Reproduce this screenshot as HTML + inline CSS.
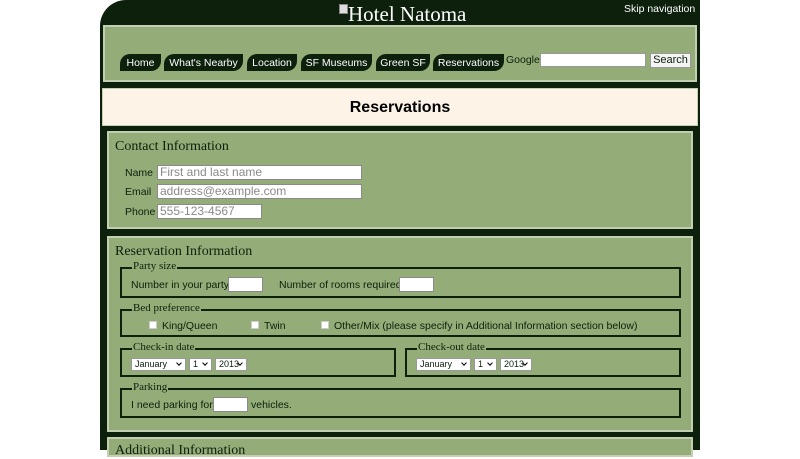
<!DOCTYPE html>
<html><head><style>
*{box-sizing:border-box;margin:0;padding:0}
body{width:800px;height:450px;background:#fff;position:relative;overflow:hidden;font-family:"Liberation Sans",sans-serif;font-size:10.5px;color:#0c1f0c;white-space:nowrap}
.a{position:absolute}
#wrap{left:100px;top:0;width:600px;height:450px;background:#0c200c;border-top-left-radius:26px}
.serif{font-family:"Liberation Serif",serif}
.tab{position:absolute;top:54px;height:17px;background:#0c200c;color:#fff;border-radius:10px 0 10px 0;font-size:10.5px;line-height:18px;text-align:center}
.panel{background:#94ad78;border:2px solid #c3cfb3}
.inp{position:absolute;background:#fff;border:1px solid #8a8a8a;height:15px;font-size:12px;color:#8a8a8a;line-height:13px;padding-left:2px}
.fs{position:absolute;border:2px solid #0c200c}
.lg{position:absolute;top:-9px;left:10px;background:#94ad78;padding:0 1px;font-family:"Liberation Serif",serif;font-size:11px}
.sel{position:absolute;background:#fff;border:1px solid #999;height:13px;font-size:9px;line-height:11px;padding-left:3px}
.sel:after{content:"";position:absolute;right:4px;top:2px;width:3px;height:3px;border-right:1.5px solid #000;border-bottom:1.5px solid #000;transform:rotate(45deg)}
.cb{position:absolute;width:8px;height:8px;background:#fff;border:1px solid #ccc}
</style></head><body>
<div id="wrap" class="a"></div>
<div class="a" style="left:339px;top:4px;width:9px;height:10px;border:1px solid #888;background:#ddd"></div>
<div class="a serif" style="left:348px;top:2px;color:#fff;font-size:21px">Hotel Natoma</div>
<div class="a" style="left:624px;top:3px;color:#fff;font-size:10.5px">Skip navigation</div>
<div class="a panel" style="left:103px;top:25px;width:594px;height:57px"></div>
<div class="tab" style="left:120px;width:41px">Home</div>
<div class="tab" style="left:164px;width:79px">What's Nearby</div>
<div class="tab" style="left:247px;width:50px">Location</div>
<div class="tab" style="left:301px;width:71px">SF Museums</div>
<div class="tab" style="left:376px;width:54px">Green SF</div>
<div class="tab" style="left:433px;width:71px">Reservations</div>
<div class="a" style="left:506px;top:54px">Google</div>
<div class="a" style="left:540px;top:53px;width:106px;height:14px;background:#fff;border:1px solid #999"></div>
<div class="a" style="left:650px;top:53px;width:41px;height:15px;background:#f4f4f4;border:1px solid #999;font-size:11px;text-align:center;line-height:13px">Search</div>
<div class="a" style="left:102px;top:88px;width:596px;height:38px;background:#fdf3e6;border:1px solid #c3cfb3;text-align:center;font-weight:bold;font-size:16px;line-height:38px;color:#000">Reservations</div>

<div class="a panel" style="left:107px;top:131px;width:586px;height:98px"></div>
<div class="a serif" style="left:115px;top:139px;font-size:14px">Contact Information</div>
<div class="a" style="left:125px;top:167px">Name</div>
<div class="a" style="left:125px;top:186px">Email</div>
<div class="a" style="left:125px;top:206px">Phone</div>
<div class="inp" style="left:157px;top:165px;width:205px">First and last name</div>
<div class="inp" style="left:157px;top:184px;width:205px">address@example.com</div>
<div class="inp" style="left:157px;top:204px;width:105px">555-123-4567</div>

<div class="a panel" style="left:107px;top:236px;width:586px;height:196px"></div>
<div class="a serif" style="left:115px;top:244px;font-size:14px">Reservation Information</div>
<div class="fs" style="left:120px;top:267px;width:561px;height:31px"><span class="lg">Party size</span></div>
<div class="a" style="left:131px;top:279px">Number in your party</div>
<div class="inp" style="left:228px;top:277px;width:35px"></div>
<div class="a" style="left:279px;top:279px">Number of rooms required</div>
<div class="inp" style="left:399px;top:277px;width:35px"></div>
<div class="fs" style="left:120px;top:309px;width:561px;height:28px"><span class="lg">Bed preference</span></div>
<div class="cb" style="left:149px;top:321px"></div><div class="a" style="left:162px;top:320px">King/Queen</div>
<div class="cb" style="left:251px;top:321px"></div><div class="a" style="left:264px;top:320px">Twin</div>
<div class="cb" style="left:321px;top:321px"></div><div class="a" style="left:334px;top:320px">Other/Mix (please specify in Additional Information section below)</div>
<div class="fs" style="left:120px;top:348px;width:276px;height:29px"><span class="lg">Check-in date</span></div>
<div class="sel" style="left:131px;top:358px;width:55px">January</div>
<div class="sel" style="left:189px;top:358px;width:23px">1</div>
<div class="sel" style="left:215px;top:358px;width:32px">2013</div>
<div class="fs" style="left:405px;top:348px;width:276px;height:29px"><span class="lg">Check-out date</span></div>
<div class="sel" style="left:416px;top:358px;width:55px">January</div>
<div class="sel" style="left:474px;top:358px;width:23px">1</div>
<div class="sel" style="left:500px;top:358px;width:32px">2013</div>
<div class="fs" style="left:120px;top:388px;width:561px;height:30px"><span class="lg">Parking</span></div>
<div class="a" style="left:131px;top:399px">I need parking for</div>
<div class="inp" style="left:213px;top:397px;width:35px"></div>
<div class="a" style="left:251px;top:399px">vehicles.</div>

<div class="a panel" style="left:107px;top:437px;width:586px;height:20px"></div>
<div class="a serif" style="left:115px;top:443px;font-size:14px">Additional Information</div>
</body></html>
